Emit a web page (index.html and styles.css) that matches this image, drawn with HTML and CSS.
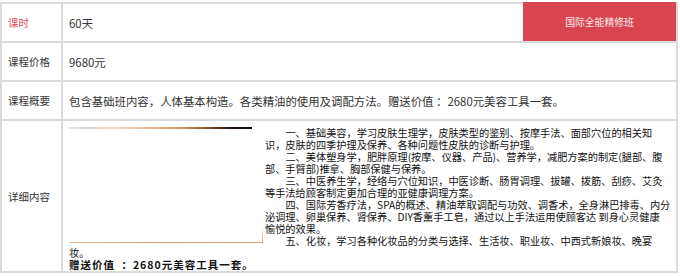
FILE: index.html
```html
<!DOCTYPE html>
<html lang="zh-CN">
<head>
<meta charset="utf-8">
<title>课程详情</title>
<link rel="stylesheet" href="styles.css">
</head>
<body>
<div class="tbl">
  <div class="label label-red">课时</div>
  <div class="value">60天</div>
  <div class="badge">国际全能精修班</div>

  <div class="label">课程价格</div>
  <div class="value span">9680元</div>

  <div class="label">课程概要</div>
  <div class="value span">包含基础班内容，人体基本构造。各类精油的使用及调配方法。赠送价值 ：2680元美容工具一套。</div>

  <div class="label">详细内容</div>
  <div class="detail span">
    <div class="photo"></div>
    <p class="item">一、基础美容，学习皮肤生理学，皮肤类型的鉴别、按摩手法、面部穴位的相关知<br>识，皮肤的四季护理及保养、各种问题性皮肤的诊断与护理。</p>
    <p class="item">二、美体塑身学，肥胖原理(按摩、仪器、产品)、营养学，减肥方案的制定(腿部、腹<br>部、手臂部)推拿、胸部保健与保养。</p>
    <p class="item">三、中医养生学，经络与穴位知识，中医诊断、肠胃调理、拔罐、拨筋、刮痧、艾灸<br>等手法给顾客制定更加合理的亚健康调理方案。</p>
    <p class="item">四、国际芳香疗法，SPA的概述、精油萃取调配与功效、调香术，全身淋巴排毒、内分<br>泌调理、卵巢保养、肾保养、DIY香薰手工皂，通过以上手法运用使顾客达 到身心灵健康<br>愉悦的效果。</p>
    <p class="item">五、化妆，学习各种化妆品的分类与选择、生活妆、职业妆、中西式新娘妆、晚宴<br>妆。</p>
    <p class="gift">赠送价值 ：2680元美容工具一套。</p>
  </div>
</div>
</body>
</html>
```

FILE: styles.css
```css
html, body {
  margin: 0;
  padding: 0;
  background: #ffffff;
}

body {
  font-family: "Noto Sans CJK SC", "Noto Sans", sans-serif;
  color: #333333;
}

.tbl {
  margin-top: 2px;
  width: 678px;
  box-sizing: border-box;
  display: grid;
  grid-template-columns: 61px 460px 155px;
  grid-template-rows: 39px 39px 39px 152px;
  border-top: 2px solid #dadada;
  border-left: 2px solid #dadada;
}

.tbl > div {
  box-sizing: border-box;
  border-bottom: 2px solid #dadada;
}

.label {
  border-right: 2px solid #dadada;
  padding-left: 6px;
  display: flex;
  align-items: center;
  font-size: 10.5px;
  color: #333333;
}

.label-red {
  color: #e2505d;
}

.value {
  padding-left: 6px;
  display: flex;
  align-items: center;
  font-size: 11.4px;
  color: #333333;
}

.span {
  grid-column: 2 / 4;
  border-right: 2px solid #dadada;
}

.badge {
  background: #d94451;
  color: #fbe9ea;
  font-size: 9.8px;
  display: flex;
  align-items: center;
  justify-content: center;
  border-right: 2px solid #dadada;
  margin-top: -2px;
}

.detail {
  padding: 6px 0 0 6px;
  font-size: 10.2px;
  line-height: 12px;
  color: #111111;
  overflow: hidden;
}

.photo {
  float: left;
  width: 194px;
  height: 116px;
  margin-right: 2px;
  background:
    linear-gradient(to right, #e9e6e3 0%, #d9cfc9 10%, #f2dccb 22%, #e9b690 45%, #d99a68 60%, #a86638 72%, #5a2e16 82%, #161010 90%, #0e0e0e 100%) 0 0 / 183px 2px no-repeat,
    linear-gradient(to right, #e6b894, #d89a68 50%, #d7a27a) 0 100% / 194px 1px no-repeat,
    linear-gradient(to bottom, #ffffff, #d29a6c) 100% 100% / 1px 16px no-repeat,
    #ffffff;
}

.item {
  margin: 0;
  text-indent: 2em;
  white-space: nowrap;
}

.gift {
  margin: 0;
  font-size: 10.5px;
  font-weight: bold;
  letter-spacing: 1px;
  word-spacing: 3px;
  color: #111111;
}
```
